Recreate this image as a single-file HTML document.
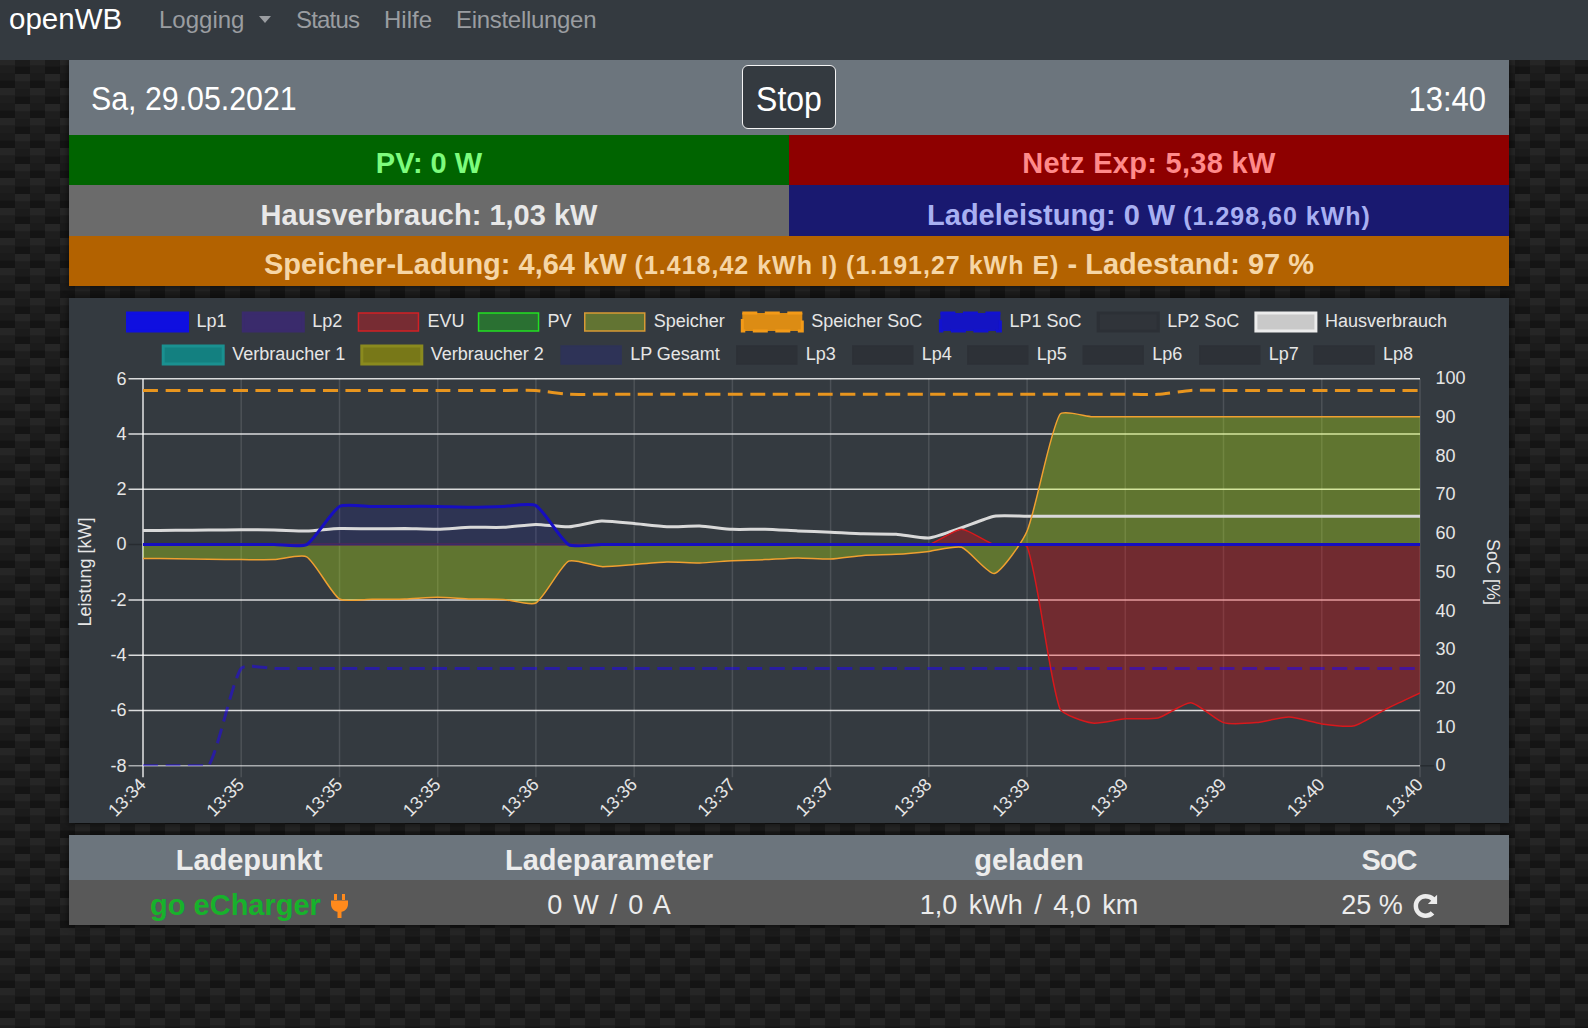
<!DOCTYPE html>
<html><head><meta charset="utf-8"><style>
*{box-sizing:border-box}
html,body{margin:0;padding:0;width:1588px;height:1028px;overflow:hidden;background:#1c1c1c;font-family:"Liberation Sans", sans-serif}
.abs{position:absolute}
.nav{position:absolute;left:0;top:0;width:1588px;height:60px;background:#343a40}
.t{position:absolute;white-space:pre;line-height:1}
.row{position:absolute;left:69px;width:1440px}
.cell{position:absolute;top:0;height:100%;text-align:center;font-weight:bold;white-space:pre}
.chart{position:absolute;left:69px;top:298px;width:1440px;height:525px;background:#343a40;overflow:hidden}
.tk{font-family:"Liberation Sans", sans-serif;font-size:18px;fill:#e6e6e6}
.lrow{position:absolute;left:44.5px;width:1500px;height:18px;display:flex;justify-content:center;font-size:18px;color:#e6e6e6}
.li{display:flex;align-items:center;margin-right:16.2px;height:18px}
.lb{display:inline-block;width:61.5px;height:19.5px;margin-left:-0.75px;margin-right:8.25px;flex:none}
.lt{white-space:pre;line-height:18px}
</style></head><body>
<svg width="1588" height="1028" style="position:absolute;left:0;top:0">
<defs><pattern id="cb" x="0" y="0" width="30" height="30" patternUnits="userSpaceOnUse">
<rect x="0" y="0" width="15" height="5.5" fill="#262626"/>
<rect x="0" y="28" width="15" height="2" fill="#262626"/>
<rect x="0" y="5.5" width="15" height="7.5" fill="#1e1e1e"/>
<rect x="0" y="13" width="15" height="7.5" fill="#1b1b1b"/>
<rect x="0" y="20.5" width="15" height="7.5" fill="#141414"/>
<rect x="15" y="14" width="15" height="7.5" fill="#262626"/>
<rect x="15" y="21.5" width="15" height="7.5" fill="#1e1e1e"/>
<rect x="15" y="29" width="15" height="1" fill="#1b1b1b"/>
<rect x="15" y="0" width="15" height="6.5" fill="#1b1b1b"/>
<rect x="15" y="6.5" width="15" height="7.5" fill="#141414"/>
</pattern></defs>
<rect width="1588" height="1028" fill="url(#cb)"/></svg>
<div class="abs" style="left:69px;top:60px;width:1440px;height:226px;box-shadow:0 0 6px 1px rgba(0,0,0,0.55)"></div>
<div class="abs" style="left:69px;top:298px;width:1440px;height:525px;box-shadow:0 0 6px 1px rgba(0,0,0,0.55)"></div>
<div class="abs" style="left:69px;top:835px;width:1440px;height:90px;box-shadow:0 0 6px 1px rgba(0,0,0,0.55)"></div>
<div class="nav">
 <div class="t" style="left:9px;top:3.5px;font-size:29.5px;color:#fff">openWB</div>
 <div class="t" style="left:159px;top:8px;font-size:24px;color:#9a9da1">Logging</div>
 <div class="abs" style="left:259px;top:16px;width:0;height:0;border-left:6.5px solid transparent;border-right:6.5px solid transparent;border-top:7px solid #9a9da1"></div>
 <div class="t" style="left:296px;top:8px;font-size:24px;color:#9a9da1;letter-spacing:-0.8px">Status</div>
 <div class="t" style="left:384px;top:8px;font-size:24px;color:#9a9da1">Hilfe</div>
 <div class="t" style="left:456px;top:8px;font-size:24px;color:#9a9da1;letter-spacing:-0.3px">Einstellungen</div>
</div>
<div class="row" style="top:60px;height:75px;background:#6c757d">
 <div class="t" style="left:22px;top:22.2px;font-size:33.5px;color:#fff;transform:scaleX(0.905);transform-origin:0 0">Sa, 29.05.2021</div>
 <div class="abs" style="left:673px;top:5px;width:94px;height:64px;background:#343a40;border:1.5px solid #f4f4f4;border-radius:6px"></div>
 <div class="t" style="left:570px;width:300px;text-align:center;top:21.8px;font-size:34.4px;color:#fff;transform:scaleX(0.93);transform-origin:150px 0">Stop</div>
 <div class="t" style="left:1117px;width:300px;text-align:right;top:21.4px;font-size:35.2px;color:#fff;transform:scaleX(0.88);transform-origin:300px 0">13:40</div>
</div>
<div class="row" style="top:135px;height:50px">
 <div class="cell" style="left:0;width:720px;background:#006400;color:#7dfc7d;font-size:29px;line-height:50px;padding-top:3px">PV: 0 W</div>
 <div class="cell" style="left:720px;width:720px;background:#8e0000;color:#ff8a8a;font-size:29px;line-height:50px;padding-top:3px;letter-spacing:0.3px">Netz Exp: 5,38 kW</div>
</div>
<div class="row" style="top:185px;height:51px">
 <div class="cell" style="left:0;width:720px;background:#6b6b6b;color:#e8e8e8;font-size:29px;line-height:51px;padding-top:4.5px">Hausverbrauch: 1,03 kW</div>
 <div class="cell" style="left:720px;width:720px;background:#191970;color:#a8b0f2;font-size:29px;line-height:51px;padding-top:4.5px">Ladeleistung: 0 W <span style="font-size:25px;letter-spacing:1px">(1.298,60 kWh)</span></div>
</div>
<div class="row" style="top:236px;height:50px">
 <div class="cell" style="left:0;width:1440px;background:#b36200;color:#f6d6a6;font-size:29px;line-height:50px;padding-top:3px">Speicher-Ladung: 4,64 kW <span style="font-size:25px;letter-spacing:1px">(1.418,42 kWh I) (1.191,27 kWh E)</span> - Ladestand: 97 %</div>
</div>
<div class="chart">
<svg width="1440" height="525" viewBox="69 298 1440 525" style="position:absolute;left:0;top:0">
<line x1="143.0" y1="378.7" x2="143.0" y2="777.3" stroke="rgba(255,255,255,0.12)" stroke-width="1.5"/>
<line x1="241.2" y1="378.7" x2="241.2" y2="777.3" stroke="rgba(255,255,255,0.12)" stroke-width="1.5"/>
<line x1="339.5" y1="378.7" x2="339.5" y2="777.3" stroke="rgba(255,255,255,0.12)" stroke-width="1.5"/>
<line x1="437.7" y1="378.7" x2="437.7" y2="777.3" stroke="rgba(255,255,255,0.12)" stroke-width="1.5"/>
<line x1="535.9" y1="378.7" x2="535.9" y2="777.3" stroke="rgba(255,255,255,0.12)" stroke-width="1.5"/>
<line x1="634.2" y1="378.7" x2="634.2" y2="777.3" stroke="rgba(255,255,255,0.12)" stroke-width="1.5"/>
<line x1="732.4" y1="378.7" x2="732.4" y2="777.3" stroke="rgba(255,255,255,0.12)" stroke-width="1.5"/>
<line x1="830.6" y1="378.7" x2="830.6" y2="777.3" stroke="rgba(255,255,255,0.12)" stroke-width="1.5"/>
<line x1="928.8" y1="378.7" x2="928.8" y2="777.3" stroke="rgba(255,255,255,0.12)" stroke-width="1.5"/>
<line x1="1027.1" y1="378.7" x2="1027.1" y2="777.3" stroke="rgba(255,255,255,0.12)" stroke-width="1.5"/>
<line x1="1125.3" y1="378.7" x2="1125.3" y2="777.3" stroke="rgba(255,255,255,0.12)" stroke-width="1.5"/>
<line x1="1223.5" y1="378.7" x2="1223.5" y2="777.3" stroke="rgba(255,255,255,0.12)" stroke-width="1.5"/>
<line x1="1321.8" y1="378.7" x2="1321.8" y2="777.3" stroke="rgba(255,255,255,0.12)" stroke-width="1.5"/>
<line x1="1420.0" y1="378.7" x2="1420.0" y2="777.3" stroke="rgba(255,255,255,0.12)" stroke-width="1.5"/>
<line x1="128.5" y1="378.7" x2="1420.0" y2="378.7" stroke="rgba(255,255,255,0.82)" stroke-width="1.5"/>
<line x1="128.5" y1="434.0" x2="1420.0" y2="434.0" stroke="rgba(255,255,255,0.82)" stroke-width="1.5"/>
<line x1="128.5" y1="489.3" x2="1420.0" y2="489.3" stroke="rgba(255,255,255,0.82)" stroke-width="1.5"/>
<line x1="128.5" y1="544.6" x2="1420.0" y2="544.6" stroke="rgba(0,0,0,0.25)" stroke-width="1.5"/>
<line x1="128.5" y1="599.9" x2="1420.0" y2="599.9" stroke="rgba(255,255,255,0.82)" stroke-width="1.5"/>
<line x1="128.5" y1="655.2" x2="1420.0" y2="655.2" stroke="rgba(255,255,255,0.82)" stroke-width="1.5"/>
<line x1="128.5" y1="710.5" x2="1420.0" y2="710.5" stroke="rgba(255,255,255,0.82)" stroke-width="1.5"/>
<line x1="128.5" y1="765.8" x2="1420.0" y2="765.8" stroke="rgba(255,255,255,0.58)" stroke-width="1.5"/>
<line x1="143.0" y1="378.7" x2="143.0" y2="777.3" stroke="rgba(255,255,255,0.82)" stroke-width="1.5"/>
<line x1="1420.0" y1="765.8" x2="1434.0" y2="765.8" stroke="rgba(0,0,0,0.25)" stroke-width="1.5"/>
<defs><clipPath id="ca"><rect x="143.0" y="378.7" width="1277.0" height="387.09999999999997"/></clipPath></defs><g clip-path="url(#ca)">
<path d="M143.0 558.4C149.5 558.5 169.2 558.7 175.7 558.8C182.3 558.9 201.9 559.1 208.5 559.2C215.0 559.3 234.7 559.6 241.2 559.6C247.8 559.6 267.4 559.9 274.0 559.6C280.5 559.3 301.7 553.8 306.7 556.8C314.8 561.7 331.3 593.7 339.5 599.0C344.4 602.2 365.7 599.2 372.2 599.2C378.8 599.2 398.4 599.1 404.9 598.9C411.5 598.7 431.1 597.2 437.7 597.2C444.2 597.2 463.9 598.7 470.4 598.9C477.0 599.1 496.7 599.0 503.2 599.4C509.7 599.8 530.9 605.9 535.9 603.0C544.0 598.3 560.6 565.7 568.7 561.2C573.7 558.4 594.8 566.3 601.4 566.6C607.9 566.9 627.6 565.0 634.2 564.5C640.7 564.0 660.3 562.2 666.9 562.0C673.4 561.8 693.1 563.0 699.6 562.9C706.2 562.8 725.8 561.0 732.4 560.7C738.9 560.4 758.6 559.9 765.1 559.6C771.7 559.3 791.3 558.0 797.9 557.9C804.4 557.9 824.1 559.3 830.6 559.1C837.2 558.8 856.8 555.9 863.4 555.4C869.9 554.9 889.6 554.7 896.1 554.3C902.7 553.9 922.3 552.1 928.8 551.4C935.4 550.7 955.8 545.4 961.6 547.3C968.9 549.8 988.6 574.9 994.3 573.5C1001.7 571.7 1023.1 540.8 1027.1 531.0C1036.2 509.0 1049.5 432.5 1059.8 414.5C1062.6 409.6 1086.0 416.5 1092.6 416.7C1099.1 416.9 1118.8 416.7 1125.3 416.7C1131.9 416.7 1151.5 416.7 1158.1 416.7C1164.6 416.7 1184.2 416.7 1190.8 416.7C1197.3 416.7 1217.0 416.7 1223.5 416.7C1230.1 416.7 1249.7 416.7 1256.3 416.7C1262.8 416.7 1282.5 416.7 1289.0 416.7C1295.6 416.7 1315.2 416.7 1321.8 416.7C1328.3 416.7 1348.0 416.7 1354.5 416.7C1361.1 416.7 1380.7 416.7 1387.3 416.7C1393.8 416.7 1413.5 416.7 1420.0 416.7L1420.0 544.6L143.0 544.6Z" fill="rgba(200,255,13,0.3)"/>
<path d="M143.0 544.6C149.5 544.6 169.2 544.6 175.7 544.6C182.3 544.6 201.9 544.6 208.5 544.6C215.0 544.6 234.7 544.6 241.2 544.6C247.8 544.6 267.4 544.6 274.0 544.6C280.5 544.6 300.2 544.6 306.7 544.6C313.3 544.6 332.9 544.6 339.5 544.6C346.0 544.6 365.7 544.6 372.2 544.6C378.8 544.6 398.4 544.6 404.9 544.6C411.5 544.6 431.1 544.6 437.7 544.6C444.2 544.6 463.9 544.6 470.4 544.6C477.0 544.6 496.6 544.6 503.2 544.6C509.7 544.6 529.4 544.6 535.9 544.6C542.5 544.6 562.1 544.6 568.7 544.6C575.2 544.6 594.9 544.6 601.4 544.6C608.0 544.6 627.6 544.6 634.2 544.6C640.7 544.6 660.3 544.6 666.9 544.6C673.4 544.6 693.1 544.6 699.6 544.6C706.2 544.6 725.8 544.6 732.4 544.6C738.9 544.6 758.6 544.6 765.1 544.6C771.7 544.6 791.3 544.6 797.9 544.6C804.4 544.6 824.1 544.6 830.6 544.6C837.2 544.6 856.8 544.6 863.4 544.6C869.9 544.6 889.6 544.6 896.1 544.6C902.7 544.6 922.6 546.1 928.8 544.6C935.7 543.0 955.0 529.3 961.6 529.3C968.1 529.3 987.5 542.8 994.3 544.6C1000.6 546.3 1024.9 541.4 1027.1 546.8C1038.0 574.1 1049.1 679.4 1059.8 708.4C1062.2 714.7 1085.7 722.0 1092.6 723.1C1098.8 724.1 1118.7 719.3 1125.3 718.8C1131.8 718.3 1151.8 719.5 1158.1 718.0C1164.9 716.3 1184.4 702.3 1190.8 702.7C1197.5 703.2 1216.5 720.5 1223.5 722.6C1229.6 724.4 1249.8 723.2 1256.3 722.6C1262.9 722.0 1282.5 716.9 1289.0 717.0C1295.6 717.1 1315.2 723.0 1321.8 723.9C1328.3 724.8 1348.4 727.2 1354.5 725.7C1361.5 724.1 1380.6 711.7 1387.3 708.4C1393.7 705.2 1413.5 696.0 1420.0 692.9L1420.0 544.6L143.0 544.6Z" fill="rgba(255,10,13,0.3)"/>
<path d="M143.0 544.6C149.5 544.6 169.2 544.6 175.7 544.6C182.3 544.6 201.9 544.6 208.5 544.6C215.0 544.6 234.7 544.6 241.2 544.6C247.8 544.6 267.4 544.6 274.0 544.6C280.5 544.6 301.5 547.6 306.7 544.6C314.6 540.0 331.5 511.1 339.5 506.5C344.6 503.5 365.7 506.5 372.2 506.5C378.8 506.5 398.4 506.4 404.9 506.4C411.5 506.4 431.1 506.3 437.7 506.4C444.2 506.5 463.9 507.2 470.4 507.2C477.0 507.2 496.6 506.6 503.2 506.4C509.7 506.2 530.8 502.6 535.9 505.6C543.9 510.2 560.7 539.9 568.7 544.6C573.8 547.7 594.9 544.6 601.4 544.6C608.0 544.6 627.6 544.6 634.2 544.6C640.7 544.6 660.3 544.6 666.9 544.6C673.4 544.6 693.1 544.6 699.6 544.6C706.2 544.6 725.8 544.6 732.4 544.6C738.9 544.6 758.6 544.6 765.1 544.6C771.7 544.6 791.3 544.6 797.9 544.6C804.4 544.6 824.1 544.6 830.6 544.6C837.2 544.6 856.8 544.6 863.4 544.6C869.9 544.6 889.6 544.6 896.1 544.6C902.7 544.6 922.3 544.6 928.8 544.6C935.4 544.6 955.0 544.6 961.6 544.6C968.1 544.6 987.8 544.6 994.3 544.6C1000.9 544.6 1020.5 544.6 1027.1 544.6C1033.6 544.6 1053.3 544.6 1059.8 544.6C1066.4 544.6 1086.0 544.6 1092.6 544.6C1099.1 544.6 1118.8 544.6 1125.3 544.6C1131.9 544.6 1151.5 544.6 1158.1 544.6C1164.6 544.6 1184.2 544.6 1190.8 544.6C1197.3 544.6 1217.0 544.6 1223.5 544.6C1230.1 544.6 1249.7 544.6 1256.3 544.6C1262.8 544.6 1282.5 544.6 1289.0 544.6C1295.6 544.6 1315.2 544.6 1321.8 544.6C1328.3 544.6 1348.0 544.6 1354.5 544.6C1361.1 544.6 1380.7 544.6 1387.3 544.6C1393.8 544.6 1413.5 544.6 1420.0 544.6L1420.0 544.6L143.0 544.6Z" fill="rgba(0,0,255,0.1)"/>
<path d="M143.0 530.6C149.5 530.5 169.2 530.4 175.7 530.3C182.3 530.2 201.9 530.1 208.5 530.0C215.0 530.0 234.7 529.8 241.2 529.8C247.8 529.8 267.4 529.9 274.0 530.0C280.5 530.1 300.2 531.1 306.7 531.0C313.3 530.8 332.9 528.7 339.5 528.5C346.0 528.3 365.7 528.8 372.2 528.8C378.8 528.8 398.4 528.5 404.9 528.5C411.5 528.6 431.1 529.4 437.7 529.3C444.2 529.2 463.9 527.5 470.4 527.3C477.0 527.1 496.6 527.6 503.2 527.3C509.7 527.0 529.4 524.5 535.9 524.4C542.5 524.4 562.2 527.1 568.7 526.8C575.3 526.5 594.8 521.4 601.4 521.1C607.9 520.8 627.6 523.0 634.2 523.6C640.7 524.2 660.3 526.6 666.9 526.8C673.4 527.0 693.1 525.8 699.6 526.0C706.2 526.3 725.8 529.0 732.4 529.3C738.9 529.6 758.6 529.1 765.1 529.3C771.7 529.5 791.3 530.6 797.9 530.9C804.4 531.2 824.1 531.9 830.6 532.2C837.2 532.5 856.8 533.6 863.4 533.8C869.9 534.0 889.6 533.8 896.1 534.2C902.7 534.6 922.4 538.6 928.8 538.0C935.5 537.3 955.1 529.9 961.6 527.7C968.2 525.5 987.6 517.4 994.3 516.2C1000.7 515.1 1020.5 516.2 1027.1 516.2C1033.6 516.2 1053.3 516.2 1059.8 516.2C1066.4 516.2 1086.0 516.2 1092.6 516.2C1099.1 516.2 1118.8 516.2 1125.3 516.2C1131.9 516.2 1151.5 516.2 1158.1 516.2C1164.6 516.2 1184.2 516.2 1190.8 516.2C1197.3 516.2 1217.0 516.2 1223.5 516.2C1230.1 516.2 1249.7 516.2 1256.3 516.2C1262.8 516.2 1282.5 516.2 1289.0 516.2C1295.6 516.2 1315.2 516.2 1321.8 516.2C1328.3 516.2 1348.0 516.2 1354.5 516.2C1361.1 516.2 1380.7 516.2 1387.3 516.2C1393.8 516.2 1413.5 516.2 1420.0 516.2" fill="none" stroke="#d9d9d9" stroke-width="3"/>
<path d="M143.0 765.8C149.5 765.8 169.2 765.8 175.7 765.8C182.3 765.8 205.3 765.8 208.5 765.8C218.4 751.0 231.3 683.2 241.2 668.4C244.4 663.7 267.4 668.4 274.0 668.4C280.5 668.4 300.2 668.4 306.7 668.4C313.3 668.4 332.9 668.4 339.5 668.4C346.0 668.4 365.7 668.4 372.2 668.4C378.8 668.4 398.4 668.4 404.9 668.4C411.5 668.4 431.1 668.4 437.7 668.4C444.2 668.4 463.9 668.4 470.4 668.4C477.0 668.4 496.6 668.4 503.2 668.4C509.7 668.4 529.4 668.4 535.9 668.4C542.5 668.4 562.1 668.4 568.7 668.4C575.2 668.4 594.9 668.4 601.4 668.4C608.0 668.4 627.6 668.4 634.2 668.4C640.7 668.4 660.3 668.4 666.9 668.4C673.4 668.4 693.1 668.4 699.6 668.4C706.2 668.4 725.8 668.4 732.4 668.4C738.9 668.4 758.6 668.4 765.1 668.4C771.7 668.4 791.3 668.4 797.9 668.4C804.4 668.4 824.1 668.4 830.6 668.4C837.2 668.4 856.8 668.4 863.4 668.4C869.9 668.4 889.6 668.4 896.1 668.4C902.7 668.4 922.3 668.4 928.8 668.4C935.4 668.4 955.0 668.4 961.6 668.4C968.1 668.4 987.8 668.4 994.3 668.4C1000.9 668.4 1020.5 668.4 1027.1 668.4C1033.6 668.4 1053.3 668.4 1059.8 668.4C1066.4 668.4 1086.0 668.4 1092.6 668.4C1099.1 668.4 1118.8 668.4 1125.3 668.4C1131.9 668.4 1151.5 668.4 1158.1 668.4C1164.6 668.4 1184.2 668.4 1190.8 668.4C1197.3 668.4 1217.0 668.4 1223.5 668.4C1230.1 668.4 1249.7 668.4 1256.3 668.4C1262.8 668.4 1282.5 668.4 1289.0 668.4C1295.6 668.4 1315.2 668.4 1321.8 668.4C1328.3 668.4 1348.0 668.4 1354.5 668.4C1361.1 668.4 1380.7 668.4 1387.3 668.4C1393.8 668.4 1413.5 668.4 1420.0 668.4" fill="none" stroke="rgba(30,0,255,0.5)" stroke-width="3" stroke-dasharray="15 7.5"/>
<path d="M143.0 390.5C149.5 390.5 169.2 390.5 175.7 390.5C182.3 390.5 201.9 390.5 208.5 390.5C215.0 390.5 234.7 390.5 241.2 390.5C247.8 390.5 267.4 390.5 274.0 390.5C280.5 390.5 300.2 390.5 306.7 390.5C313.3 390.5 332.9 390.5 339.5 390.5C346.0 390.5 365.7 390.5 372.2 390.5C378.8 390.5 398.4 390.5 404.9 390.5C411.5 390.5 431.1 390.5 437.7 390.5C444.2 390.5 463.9 390.5 470.4 390.5C477.0 390.5 496.6 390.5 503.2 390.5C509.7 390.5 529.4 390.1 535.9 390.5C542.5 390.9 562.1 393.9 568.7 394.3C575.2 394.7 594.9 394.3 601.4 394.3C608.0 394.3 627.6 394.3 634.2 394.3C640.7 394.3 660.3 394.3 666.9 394.3C673.4 394.3 693.1 394.3 699.6 394.3C706.2 394.3 725.8 394.3 732.4 394.3C738.9 394.3 758.6 394.3 765.1 394.3C771.7 394.3 791.3 394.3 797.9 394.3C804.4 394.3 824.1 394.3 830.6 394.3C837.2 394.3 856.8 394.3 863.4 394.3C869.9 394.3 889.6 394.3 896.1 394.3C902.7 394.3 922.3 394.3 928.8 394.3C935.4 394.3 955.0 394.3 961.6 394.3C968.1 394.3 987.8 394.3 994.3 394.3C1000.9 394.3 1020.5 394.3 1027.1 394.3C1033.6 394.3 1053.3 394.3 1059.8 394.3C1066.4 394.3 1086.0 394.3 1092.6 394.3C1099.1 394.3 1118.8 394.3 1125.3 394.3C1131.9 394.3 1151.5 394.7 1158.1 394.3C1164.6 393.9 1184.2 390.8 1190.8 390.4C1197.3 390.0 1217.0 390.4 1223.5 390.4C1230.1 390.4 1249.7 390.4 1256.3 390.4C1262.8 390.4 1282.5 390.4 1289.0 390.4C1295.6 390.4 1315.2 390.4 1321.8 390.4C1328.3 390.4 1348.0 390.4 1354.5 390.4C1361.1 390.4 1380.7 390.4 1387.3 390.4C1393.8 390.4 1413.5 390.4 1420.0 390.4" fill="none" stroke="#e8951e" stroke-width="3" stroke-dasharray="15 7.5"/>
<path d="M143.0 558.4C149.5 558.5 169.2 558.7 175.7 558.8C182.3 558.9 201.9 559.1 208.5 559.2C215.0 559.3 234.7 559.6 241.2 559.6C247.8 559.6 267.4 559.9 274.0 559.6C280.5 559.3 301.7 553.8 306.7 556.8C314.8 561.7 331.3 593.7 339.5 599.0C344.4 602.2 365.7 599.2 372.2 599.2C378.8 599.2 398.4 599.1 404.9 598.9C411.5 598.7 431.1 597.2 437.7 597.2C444.2 597.2 463.9 598.7 470.4 598.9C477.0 599.1 496.7 599.0 503.2 599.4C509.7 599.8 530.9 605.9 535.9 603.0C544.0 598.3 560.6 565.7 568.7 561.2C573.7 558.4 594.8 566.3 601.4 566.6C607.9 566.9 627.6 565.0 634.2 564.5C640.7 564.0 660.3 562.2 666.9 562.0C673.4 561.8 693.1 563.0 699.6 562.9C706.2 562.8 725.8 561.0 732.4 560.7C738.9 560.4 758.6 559.9 765.1 559.6C771.7 559.3 791.3 558.0 797.9 557.9C804.4 557.9 824.1 559.3 830.6 559.1C837.2 558.8 856.8 555.9 863.4 555.4C869.9 554.9 889.6 554.7 896.1 554.3C902.7 553.9 922.3 552.1 928.8 551.4C935.4 550.7 955.8 545.4 961.6 547.3C968.9 549.8 988.6 574.9 994.3 573.5C1001.7 571.7 1023.1 540.8 1027.1 531.0C1036.2 509.0 1049.5 432.5 1059.8 414.5C1062.6 409.6 1086.0 416.5 1092.6 416.7C1099.1 416.9 1118.8 416.7 1125.3 416.7C1131.9 416.7 1151.5 416.7 1158.1 416.7C1164.6 416.7 1184.2 416.7 1190.8 416.7C1197.3 416.7 1217.0 416.7 1223.5 416.7C1230.1 416.7 1249.7 416.7 1256.3 416.7C1262.8 416.7 1282.5 416.7 1289.0 416.7C1295.6 416.7 1315.2 416.7 1321.8 416.7C1328.3 416.7 1348.0 416.7 1354.5 416.7C1361.1 416.7 1380.7 416.7 1387.3 416.7C1393.8 416.7 1413.5 416.7 1420.0 416.7" fill="none" stroke="#f0a030" stroke-width="1.5"/>
<path d="M143.0 544.6C149.5 544.6 169.2 544.6 175.7 544.6C182.3 544.6 201.9 544.6 208.5 544.6C215.0 544.6 234.7 544.6 241.2 544.6C247.8 544.6 267.4 544.6 274.0 544.6C280.5 544.6 300.2 544.6 306.7 544.6C313.3 544.6 332.9 544.6 339.5 544.6C346.0 544.6 365.7 544.6 372.2 544.6C378.8 544.6 398.4 544.6 404.9 544.6C411.5 544.6 431.1 544.6 437.7 544.6C444.2 544.6 463.9 544.6 470.4 544.6C477.0 544.6 496.6 544.6 503.2 544.6C509.7 544.6 529.4 544.6 535.9 544.6C542.5 544.6 562.1 544.6 568.7 544.6C575.2 544.6 594.9 544.6 601.4 544.6C608.0 544.6 627.6 544.6 634.2 544.6C640.7 544.6 660.3 544.6 666.9 544.6C673.4 544.6 693.1 544.6 699.6 544.6C706.2 544.6 725.8 544.6 732.4 544.6C738.9 544.6 758.6 544.6 765.1 544.6C771.7 544.6 791.3 544.6 797.9 544.6C804.4 544.6 824.1 544.6 830.6 544.6C837.2 544.6 856.8 544.6 863.4 544.6C869.9 544.6 889.6 544.6 896.1 544.6C902.7 544.6 922.6 546.1 928.8 544.6C935.7 543.0 955.0 529.3 961.6 529.3C968.1 529.3 987.5 542.8 994.3 544.6C1000.6 546.3 1024.9 541.4 1027.1 546.8C1038.0 574.1 1049.1 679.4 1059.8 708.4C1062.2 714.7 1085.7 722.0 1092.6 723.1C1098.8 724.1 1118.7 719.3 1125.3 718.8C1131.8 718.3 1151.8 719.5 1158.1 718.0C1164.9 716.3 1184.4 702.3 1190.8 702.7C1197.5 703.2 1216.5 720.5 1223.5 722.6C1229.6 724.4 1249.8 723.2 1256.3 722.6C1262.9 722.0 1282.5 716.9 1289.0 717.0C1295.6 717.1 1315.2 723.0 1321.8 723.9C1328.3 724.8 1348.4 727.2 1354.5 725.7C1361.5 724.1 1380.6 711.7 1387.3 708.4C1393.7 705.2 1413.5 696.0 1420.0 692.9" fill="none" stroke="#d8181c" stroke-width="1.5"/>
<path d="M143.0 544.6H1420.0" fill="none" stroke="#3a2a6a" stroke-width="2"/>
<path d="M143.0 544.6C149.5 544.6 169.2 544.6 175.7 544.6C182.3 544.6 201.9 544.6 208.5 544.6C215.0 544.6 234.7 544.6 241.2 544.6C247.8 544.6 267.4 544.6 274.0 544.6C280.5 544.6 301.5 547.6 306.7 544.6C314.6 540.0 331.5 511.1 339.5 506.5C344.6 503.5 365.7 506.5 372.2 506.5C378.8 506.5 398.4 506.4 404.9 506.4C411.5 506.4 431.1 506.3 437.7 506.4C444.2 506.5 463.9 507.2 470.4 507.2C477.0 507.2 496.6 506.6 503.2 506.4C509.7 506.2 530.8 502.6 535.9 505.6C543.9 510.2 560.7 539.9 568.7 544.6C573.8 547.7 594.9 544.6 601.4 544.6C608.0 544.6 627.6 544.6 634.2 544.6C640.7 544.6 660.3 544.6 666.9 544.6C673.4 544.6 693.1 544.6 699.6 544.6C706.2 544.6 725.8 544.6 732.4 544.6C738.9 544.6 758.6 544.6 765.1 544.6C771.7 544.6 791.3 544.6 797.9 544.6C804.4 544.6 824.1 544.6 830.6 544.6C837.2 544.6 856.8 544.6 863.4 544.6C869.9 544.6 889.6 544.6 896.1 544.6C902.7 544.6 922.3 544.6 928.8 544.6C935.4 544.6 955.0 544.6 961.6 544.6C968.1 544.6 987.8 544.6 994.3 544.6C1000.9 544.6 1020.5 544.6 1027.1 544.6C1033.6 544.6 1053.3 544.6 1059.8 544.6C1066.4 544.6 1086.0 544.6 1092.6 544.6C1099.1 544.6 1118.8 544.6 1125.3 544.6C1131.9 544.6 1151.5 544.6 1158.1 544.6C1164.6 544.6 1184.2 544.6 1190.8 544.6C1197.3 544.6 1217.0 544.6 1223.5 544.6C1230.1 544.6 1249.7 544.6 1256.3 544.6C1262.8 544.6 1282.5 544.6 1289.0 544.6C1295.6 544.6 1315.2 544.6 1321.8 544.6C1328.3 544.6 1348.0 544.6 1354.5 544.6C1361.1 544.6 1380.7 544.6 1387.3 544.6C1393.8 544.6 1413.5 544.6 1420.0 544.6" fill="none" stroke="#160ec0" stroke-width="3"/>
</g>
<text x="126.5" y="384.5" text-anchor="end" class="tk">6</text>
<text x="126.5" y="439.8" text-anchor="end" class="tk">4</text>
<text x="126.5" y="495.1" text-anchor="end" class="tk">2</text>
<text x="126.5" y="550.4" text-anchor="end" class="tk">0</text>
<text x="126.5" y="605.7" text-anchor="end" class="tk">-2</text>
<text x="126.5" y="661.0" text-anchor="end" class="tk">-4</text>
<text x="126.5" y="716.3" text-anchor="end" class="tk">-6</text>
<text x="126.5" y="771.6" text-anchor="end" class="tk">-8</text>
<text x="1435.5" y="384.2" class="tk">100</text>
<text x="1435.5" y="422.9" class="tk">90</text>
<text x="1435.5" y="461.6" class="tk">80</text>
<text x="1435.5" y="500.3" class="tk">70</text>
<text x="1435.5" y="539.0" class="tk">60</text>
<text x="1435.5" y="577.8" class="tk">50</text>
<text x="1435.5" y="616.5" class="tk">40</text>
<text x="1435.5" y="655.2" class="tk">30</text>
<text x="1435.5" y="693.9" class="tk">20</text>
<text x="1435.5" y="732.6" class="tk">10</text>
<text x="1435.5" y="771.3" class="tk">0</text>
<text x="0" y="0" transform="translate(142.7 781.3) rotate(-46)" text-anchor="end" dominant-baseline="central" class="tk">13:34</text>
<text x="0" y="0" transform="translate(240.9 781.3) rotate(-46)" text-anchor="end" dominant-baseline="central" class="tk">13:35</text>
<text x="0" y="0" transform="translate(339.2 781.3) rotate(-46)" text-anchor="end" dominant-baseline="central" class="tk">13:35</text>
<text x="0" y="0" transform="translate(437.4 781.3) rotate(-46)" text-anchor="end" dominant-baseline="central" class="tk">13:35</text>
<text x="0" y="0" transform="translate(535.6 781.3) rotate(-46)" text-anchor="end" dominant-baseline="central" class="tk">13:36</text>
<text x="0" y="0" transform="translate(633.9 781.3) rotate(-46)" text-anchor="end" dominant-baseline="central" class="tk">13:36</text>
<text x="0" y="0" transform="translate(732.1 781.3) rotate(-46)" text-anchor="end" dominant-baseline="central" class="tk">13:37</text>
<text x="0" y="0" transform="translate(830.3 781.3) rotate(-46)" text-anchor="end" dominant-baseline="central" class="tk">13:37</text>
<text x="0" y="0" transform="translate(928.5 781.3) rotate(-46)" text-anchor="end" dominant-baseline="central" class="tk">13:38</text>
<text x="0" y="0" transform="translate(1026.8 781.3) rotate(-46)" text-anchor="end" dominant-baseline="central" class="tk">13:39</text>
<text x="0" y="0" transform="translate(1125.0 781.3) rotate(-46)" text-anchor="end" dominant-baseline="central" class="tk">13:39</text>
<text x="0" y="0" transform="translate(1223.2 781.3) rotate(-46)" text-anchor="end" dominant-baseline="central" class="tk">13:39</text>
<text x="0" y="0" transform="translate(1321.5 781.3) rotate(-46)" text-anchor="end" dominant-baseline="central" class="tk">13:40</text>
<text x="0" y="0" transform="translate(1419.7 781.3) rotate(-46)" text-anchor="end" dominant-baseline="central" class="tk">13:40</text>
<text transform="translate(91 572) rotate(-90)" text-anchor="middle" class="tk">Leistung [kW]</text>
<text transform="translate(1486.5 572) rotate(90)" text-anchor="middle" class="tk">SoC [%]</text>
<rect x="127.50" y="313" width="60" height="18" fill="#0f0fe0"/>
<rect x="127.50" y="313" width="60" height="18" fill="none" stroke="#0f0fe0" stroke-width="3"/>
<text x="196.50" y="326.8" class="tk">Lp1</text>
<rect x="243.30" y="313" width="60" height="18" fill="#3a2b6c"/>
<rect x="243.30" y="313" width="60" height="18" fill="none" stroke="#3a2b6c" stroke-width="3"/>
<text x="312.30" y="326.8" class="tk">Lp2</text>
<rect x="358.45" y="313" width="60" height="18" fill="#772c33"/>
<rect x="358.45" y="313" width="60" height="18" fill="none" stroke="#d22025" stroke-width="1.5"/>
<text x="427.45" y="326.8" class="tk">EVU</text>
<rect x="478.55" y="313" width="60" height="18" fill="#2a7032"/>
<rect x="478.55" y="313" width="60" height="18" fill="none" stroke="#22e022" stroke-width="1.5"/>
<text x="547.55" y="326.8" class="tk">PV</text>
<rect x="584.75" y="313" width="60" height="18" fill="#627433"/>
<rect x="584.75" y="313" width="60" height="18" fill="none" stroke="#d89a35" stroke-width="1.5"/>
<text x="653.75" y="326.8" class="tk">Speicher</text>
<rect x="742.30" y="313" width="60" height="18" fill="#dc8c14"/>
<rect x="742.30" y="313" width="60" height="18" fill="none" stroke="#f39a18" stroke-width="3" stroke-dasharray="15 7.5"/>
<text x="811.30" y="326.8" class="tk">Speicher SoC</text>
<rect x="940.40" y="313" width="60" height="18" fill="#1414c4"/>
<rect x="940.40" y="313" width="60" height="18" fill="none" stroke="#1212d0" stroke-width="3" stroke-dasharray="15 7.5"/>
<text x="1009.40" y="326.8" class="tk">LP1 SoC</text>
<rect x="1098.20" y="313" width="60" height="18" fill="#30343a"/>
<rect x="1098.20" y="313" width="60" height="18" fill="none" stroke="#2c3036" stroke-width="3"/>
<text x="1167.20" y="326.8" class="tk">LP2 SoC</text>
<rect x="1255.90" y="313" width="60" height="18" fill="#c9c9c9"/>
<rect x="1255.90" y="313" width="60" height="18" fill="none" stroke="#ececec" stroke-width="3"/>
<text x="1324.90" y="326.8" class="tk">Hausverbrauch</text>
<rect x="163.20" y="346" width="60" height="18" fill="#138080"/>
<rect x="163.20" y="346" width="60" height="18" fill="none" stroke="#1a9090" stroke-width="3"/>
<text x="232.20" y="359.8" class="tk">Verbraucher 1</text>
<rect x="361.80" y="346" width="60" height="18" fill="#787818"/>
<rect x="361.80" y="346" width="60" height="18" fill="none" stroke="#8a8a1e" stroke-width="3"/>
<text x="430.80" y="359.8" class="tk">Verbraucher 2</text>
<rect x="561.15" y="346" width="60" height="18" fill="#2e3357"/>
<rect x="561.15" y="346" width="60" height="18" fill="none" stroke="#2e3357" stroke-width="1.5"/>
<text x="630.15" y="359.8" class="tk">LP Gesamt</text>
<rect x="736.75" y="346" width="60" height="18" fill="#2d3137"/>
<rect x="736.75" y="346" width="60" height="18" fill="none" stroke="#2d3137" stroke-width="1.5"/>
<text x="805.75" y="359.8" class="tk">Lp3</text>
<rect x="852.75" y="346" width="60" height="18" fill="#2d3137"/>
<rect x="852.75" y="346" width="60" height="18" fill="none" stroke="#2d3137" stroke-width="1.5"/>
<text x="921.75" y="359.8" class="tk">Lp4</text>
<rect x="967.75" y="346" width="60" height="18" fill="#2d3137"/>
<rect x="967.75" y="346" width="60" height="18" fill="none" stroke="#2d3137" stroke-width="1.5"/>
<text x="1036.75" y="359.8" class="tk">Lp5</text>
<rect x="1083.25" y="346" width="60" height="18" fill="#2d3137"/>
<rect x="1083.25" y="346" width="60" height="18" fill="none" stroke="#2d3137" stroke-width="1.5"/>
<text x="1152.25" y="359.8" class="tk">Lp6</text>
<rect x="1199.75" y="346" width="60" height="18" fill="#2d3137"/>
<rect x="1199.75" y="346" width="60" height="18" fill="none" stroke="#2d3137" stroke-width="1.5"/>
<text x="1268.75" y="359.8" class="tk">Lp7</text>
<rect x="1314.05" y="346" width="60" height="18" fill="#2d3137"/>
<rect x="1314.05" y="346" width="60" height="18" fill="none" stroke="#2d3137" stroke-width="1.5"/>
<text x="1383.05" y="359.8" class="tk">Lp8</text>
</svg>
</div>
<div class="row" style="top:835px;height:45px;background:#6c757d">
 <div class="cell" style="left:0;width:360px;color:#ececec;font-size:29px;line-height:45px;padding-top:3px">Ladepunkt</div>
 <div class="cell" style="left:360px;width:360px;color:#ececec;font-size:29px;line-height:45px;padding-top:3px">Ladeparameter</div>
 <div class="cell" style="left:720px;width:480px;color:#ececec;font-size:29px;line-height:45px;padding-top:3px">geladen</div>
 <div class="cell" style="left:1200px;width:240px;color:#ececec;font-size:29px;line-height:45px;padding-top:3px;letter-spacing:-1px">SoC</div>
</div>
<div class="row" style="top:880px;height:45px;background:#595959">
 <div class="cell" style="left:0;width:360px;color:#17b22b;font-size:29px;line-height:45px;padding-top:3px;padding-right:27px">go eCharger</div>
 <div class="cell" style="left:360px;width:360px;color:#ececec;font-size:27px;line-height:45px;padding-top:3px;font-weight:normal;word-spacing:3.5px">0 W / 0 A</div>
 <div class="cell" style="left:720px;width:480px;color:#ececec;font-size:27px;line-height:45px;padding-top:3px;font-weight:normal;word-spacing:4px">1,0 kWh / 4,0 km</div>
 <div class="cell" style="left:1200px;width:240px;color:#ececec;font-size:27px;line-height:45px;padding-top:3px;font-weight:normal;padding-right:34px">25 %</div>
</div>
<svg width="19" height="24" viewBox="0 0 19 24" style="position:absolute;left:330px;top:894px"><path d="M4 0h3v6H4zM12 0h3v6h-3zM1 6.5h17v3.5c0 4.2-3 7.3-6.5 7.8V24h-4v-6.2C4 17.3 1 14.2 1 10z" fill="#ff8a1c"/></svg>
<svg width="25" height="24" viewBox="0 0 25 24" style="position:absolute;left:1413px;top:894px"><path d="M21.5 3.2l2.6-2.4v9.2h-9.2l3.3-3.3C16.7 5.4 14.8 4.6 12.5 4.6c-4.1 0-7.4 3.3-7.4 7.4s3.3 7.4 7.4 7.4c2 0 3.9-.8 5.2-2.1l3.6 3.1c-2.2 2.3-5.3 3.6-8.8 3.6C5.9 24 .6 18.6.6 12S5.9 0 12.5 0c3.5 0 6.6 1.2 9 3.2z" fill="#ececec"/></svg>
</body></html>
